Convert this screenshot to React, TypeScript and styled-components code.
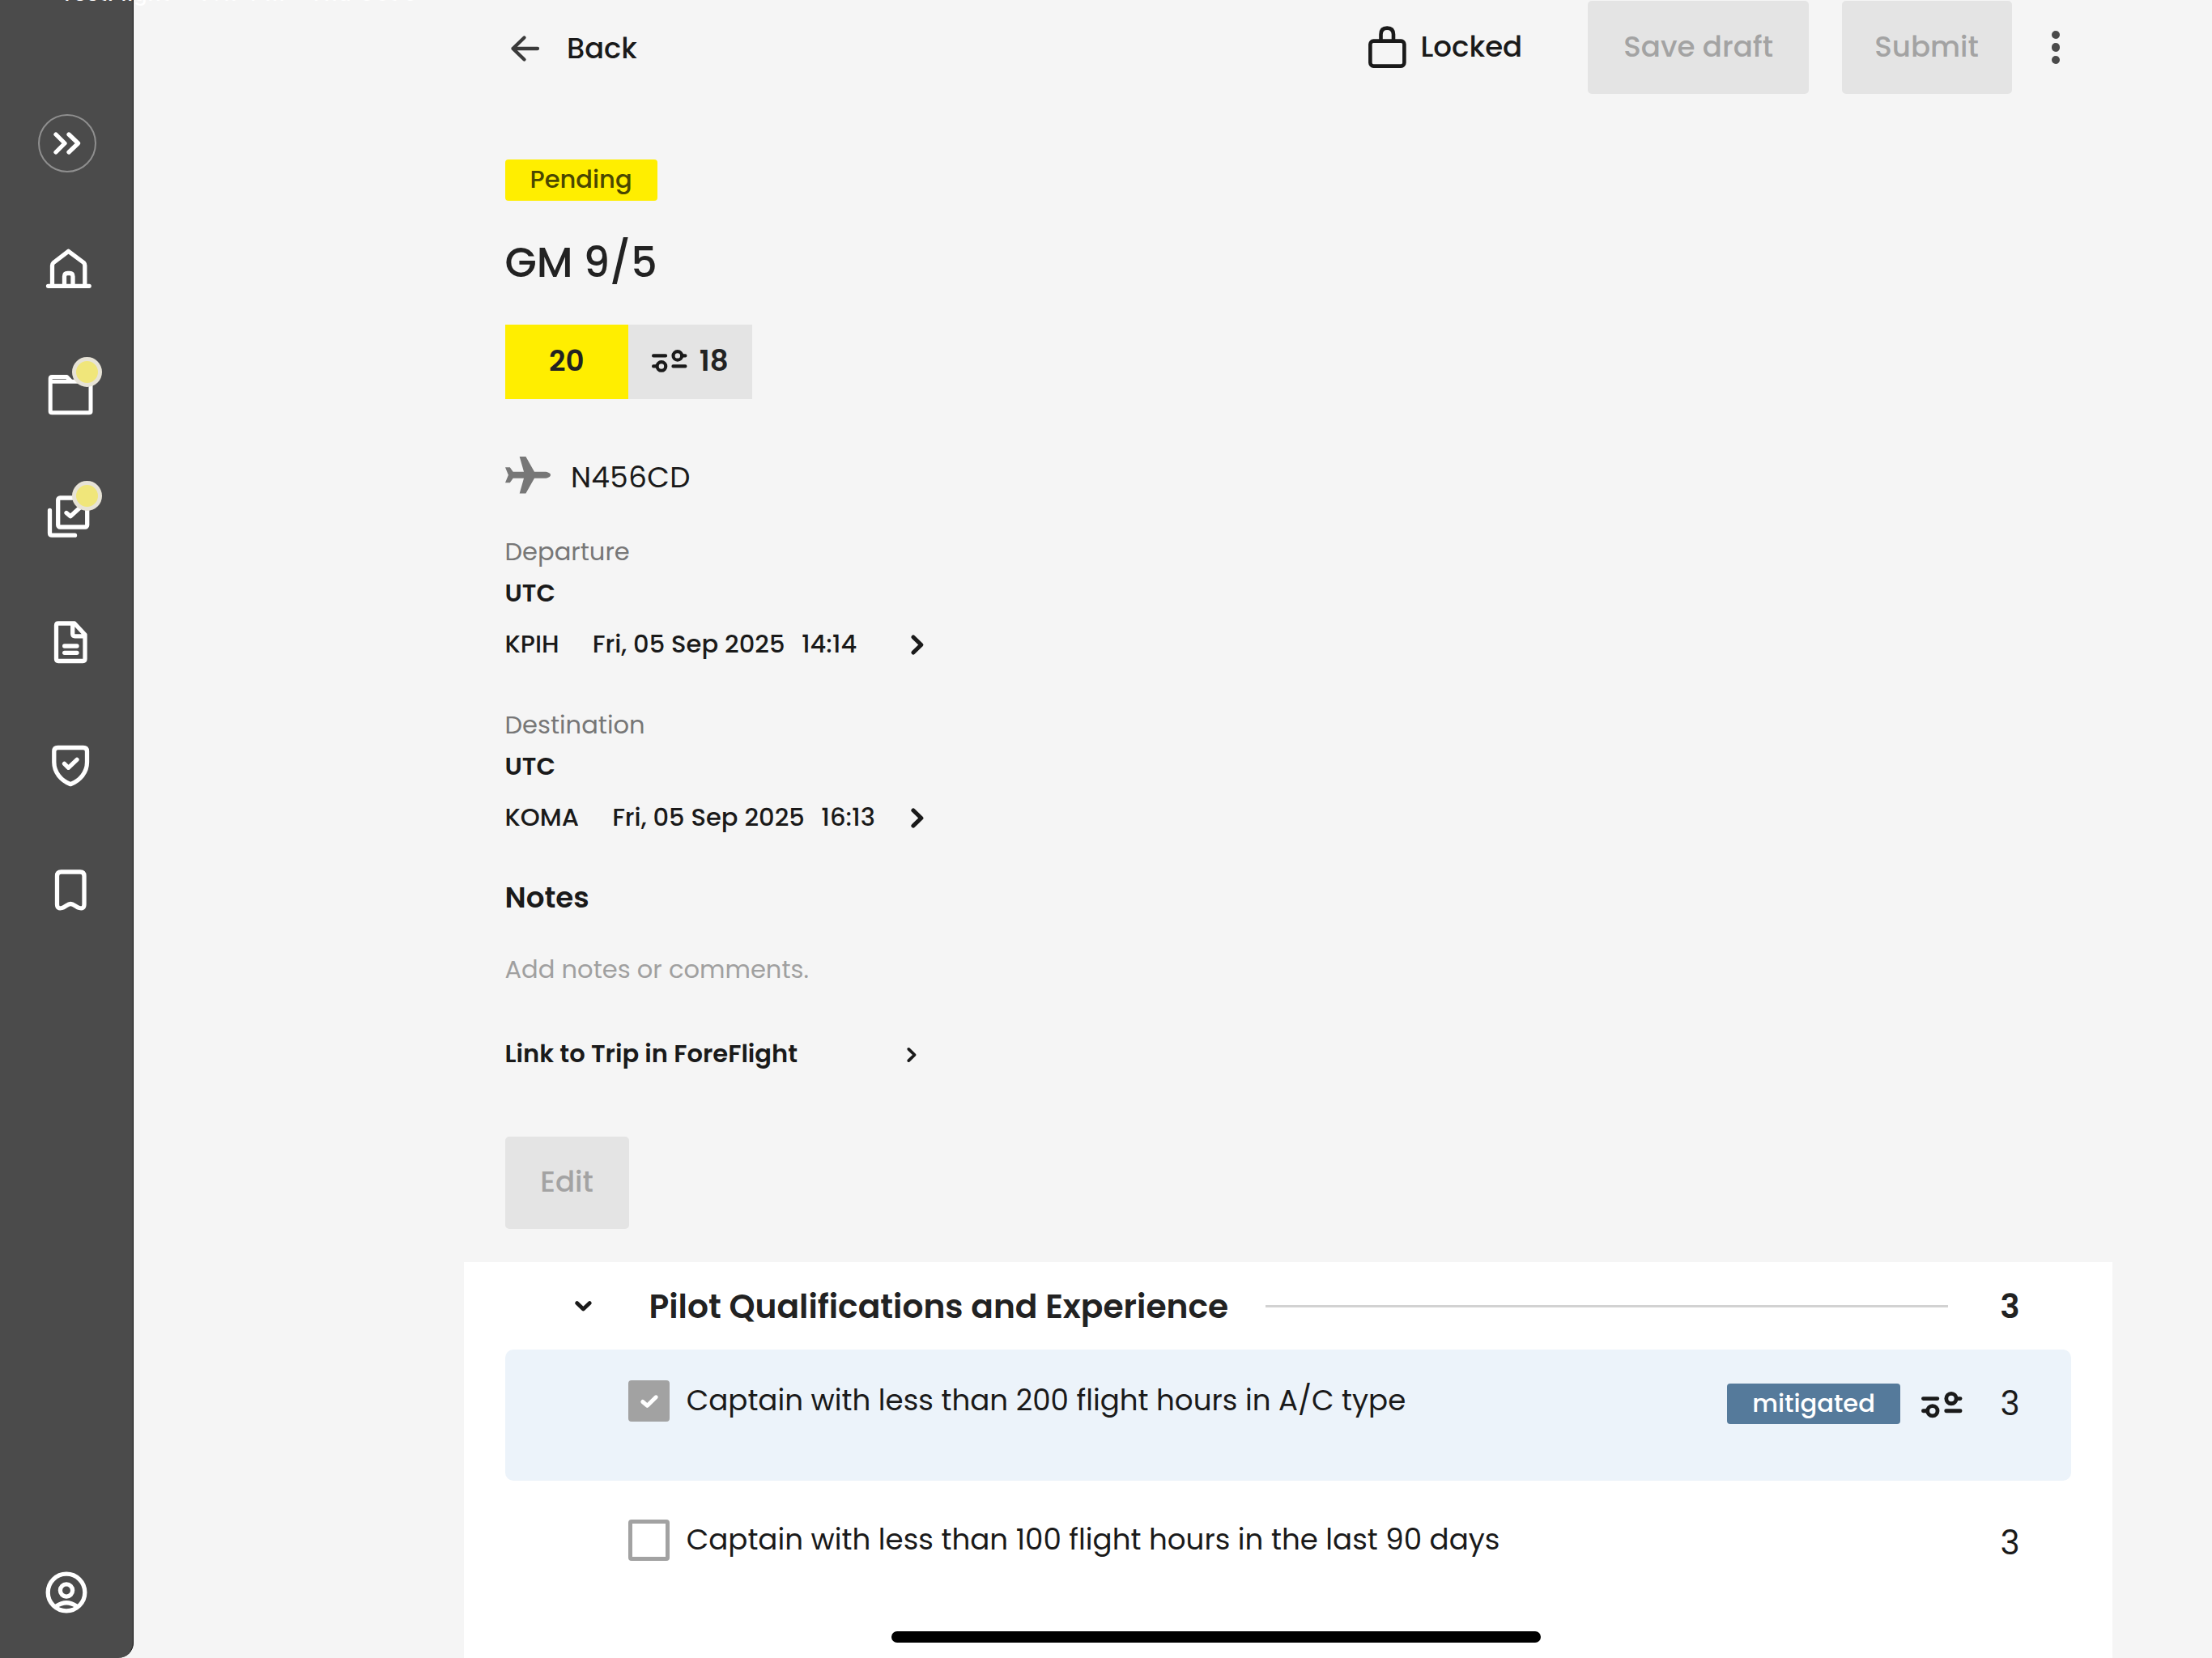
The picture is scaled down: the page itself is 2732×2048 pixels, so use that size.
import React from "react";
import styled, { createGlobalStyle, css } from "styled-components";

const GlobalStyle = createGlobalStyle`
  *, *::before, *::after { box-sizing: border-box; }
  body {
    margin: 0;
    background: #f5f5f5;
    color: #1a1a1a;
    font-family: "Poppins", "Inter", sans-serif;
    overflow: hidden;
  }
  button { font: inherit; border: 0; padding: 0; background: none; color: inherit; }
  svg { display: block; flex: none; overflow: visible; }
`;

const size = {
  sm: css`font-size: 30.56px; line-height: 50.9px;`,
  md: css`font-size: 35.65px; line-height: 56px;`,
  lg: css`font-size: 40.75px; line-height: 62px;`,
  xl: css`font-size: 50.8px; line-height: 76px;`,
};

const Screen = styled.div`
  position: relative;
  display: flex;
  width: 2732px;
  height: 2048px;
  overflow: hidden;
  background: #f5f5f5;
`;

/* ---------- status bar ---------- */

const StatusBar = styled.div`
  position: absolute;
  top: -22px;
  left: 74px;
  z-index: 2;
  display: flex;
  gap: 29px;
  font: 500 27px/28px "Inter", sans-serif;
  letter-spacing: 0.9px;
  white-space: nowrap;
  color: #fff;
`;

const StatusApp = styled.span`
  width: 145px;
`;

/* ---------- sidebar ---------- */

const Sidebar = styled.nav`
  flex: none;
  display: flex;
  flex-direction: column;
  align-items: center;
  width: 165px;
  height: 2048px;
  padding: 141px 0 0 1px;
  border-right: 1px solid #0c0c0c;
  border-bottom-right-radius: 19px;
  background: #4b4b4b;
`;

const ExpandButton = styled.button`
  display: flex;
  align-items: center;
  justify-content: center;
  width: 72px;
  height: 72px;
  margin-bottom: 42px;
  border: 2px solid #8f8f8f;
  border-radius: 50%;
`;

const NavItem = styled.div<{ $last?: boolean }>`
  position: relative;
  display: flex;
  align-items: center;
  justify-content: center;
  width: 163px;
  height: ${(p) => (p.$last ? 80 : 153)}px;
  ${(p) => p.$last && "margin-top: auto; margin-bottom: 41.5px;"}
`;

const Badge = styled.span`
  position: absolute;
  top: 32.8px;
  left: 87.8px;
  width: 37px;
  height: 37px;
  border: 5.5px solid #e7e3d6;
  border-radius: 50%;
  background: #f0e67a;
`;

const Glyph = styled.svg<{ $stroke?: number; $color?: string }>`
  fill: none;
  stroke: ${(p) => p.$color ?? "#1a1a1a"};
  stroke-width: ${(p) => p.$stroke ?? 5.3};
  stroke-linecap: round;
  stroke-linejoin: round;
`;

/* ---------- main column ---------- */

const Main = styled.main`
  display: flex;
  flex-direction: column;
  width: 2036.4px;
  margin-left: 408px;
`;

const Header = styled.header`
  display: flex;
  align-items: center;
  height: 117px;
  padding: 0 51px 0 50.5px;
  font-weight: 500;
  ${size.md}
`;

const Back = styled.button`
  display: flex;
  align-items: center;
  gap: 33px;
  margin-right: auto;
  padding: 2px 0 0 7.5px;
  font-size: 35.2px;
  font-weight: 500;
`;

const Locked = styled.div`
  display: flex;
  align-items: center;
  gap: 17px;
  width: 271px;
  padding-bottom: 1.4px;
`;

const Button = styled.button<{ $width: number }>`
  display: flex;
  align-items: center;
  justify-content: center;
  width: ${(p) => p.$width}px;
  height: 114.6px;
  padding-bottom: 2px;
  border-radius: 5px;
  background: #e4e4e4;
  color: #a3a3a3;
  font-weight: 500;
  ${size.md}
`;

const Actions = styled.div`
  display: flex;
  align-items: center;
  gap: 40.7px;
`;

const Menu = styled.button`
  display: flex;
  flex-direction: column;
  gap: 5.2px;
  margin: 0 14px 0 9px;
`;

const Dot = styled.i`
  width: 10.2px;
  height: 10.2px;
  border-radius: 50%;
  background: #4a4a4a;
`;

const Details = styled.section`
  display: flex;
  flex-direction: column;
  align-items: flex-start;
  height: 1442.4px;
  padding: 80.3px 50.5px 0;
`;

const Tag = styled.span<{ $bg: string; $color: string }>`
  display: flex;
  align-items: center;
  height: 50.8px;
  padding: 0 31px;
  border-radius: 4px;
  background: ${(p) => p.$bg};
  color: ${(p) => p.$color};
  font-weight: 500;
  ${size.sm}
`;

const Title = styled.h1`
  margin: 39.4px 0 37.5px;
  color: #222;
  font-weight: 500;
  ${size.xl}
`;

const Scores = styled.div`
  display: flex;
  height: 91.7px;
`;

const Score = styled.div<{ $bg: string }>`
  display: flex;
  align-items: center;
  justify-content: center;
  gap: 15px;
  width: 152.7px;
  padding-bottom: 2px;
  background: ${(p) => p.$bg};
  color: #222;
  font-weight: 600;
  ${size.md}
`;

const Aircraft = styled.div`
  display: flex;
  align-items: center;
  gap: 25.5px;
  height: 46px;
  margin: 71.3px 0 47.2px;
  ${size.md}
`;

const TailNumber = styled.span`
  padding-top: 6.6px;
  letter-spacing: 0.45px;
`;

const Leg = styled.div`
  display: flex;
  flex-direction: column;
  height: 214px;
`;

const Label = styled.span`
  color: #777;
  ${size.sm}
`;

const Zone = styled.span`
  margin-bottom: 12.2px;
  font-weight: 600;
  ${size.sm}
`;

const LinkRow = styled.div<{ $bold?: boolean }>`
  display: flex;
  align-items: center;
  justify-content: space-between;
  width: ${(p) => (p.$bold ? 508.6 : 517.2)}px;
  font-weight: ${(p) => (p.$bold ? 600 : 500)};
  white-space: pre;
  ${size.sm}
`;

const Schedule = styled.span`
  display: flex;
  gap: 20.5px;
`;

const Airport = styled.span`
  margin-right: 20.6px;
`;

const NotesTitle = styled.h2`
  margin: -4px 0 36px;
  font-weight: 600;
  ${size.md}
`;

const Placeholder = styled.p`
  margin: 0 0 53.2px;
  color: #a0a0a0;
  ${size.sm}
`;

const EditSlot = styled.div`
  margin-top: 75.6px;
`;

/* ---------- risk panel ---------- */

const Panel = styled.section`
  flex: 1;
  display: flex;
  flex-direction: column;
  gap: 10px;
  padding: 0 51px 0 50.5px;
  background: #fff;
`;

const PanelHead = styled.div`
  display: flex;
  align-items: center;
  height: 107.4px;
  margin-bottom: -10px;
  padding: 1px 50px 0 86.5px;
  color: #222;
  font-weight: 600;
  ${size.lg}
`;

const PanelTitle = styled.h2`
  margin: 0 46px 0 70.5px;
  font-size: inherit;
  font-weight: 600;
  white-space: nowrap;
`;

const Rule = styled.hr`
  flex: 1;
  height: 3px;
  margin: 0 50.5px 0 0;
  border: 0;
  background: #d2d2d2;
`;

const Points = styled.span<{ $drop?: number }>`
  width: 52px;
  padding-top: ${(p) => p.$drop ?? 0}px;
  text-align: center;
  ${size.lg}
`;

const Risk = styled.div<{ $active?: boolean }>`
  display: flex;
  align-items: flex-start;
  height: 162px;
  padding: 33px 50px 0 152.6px;
  border-radius: 10px;
  background: ${(p) => (p.$active ? "#ecf3fa" : "transparent")};
`;

const RiskLine = styled.div`
  flex: 1;
  display: flex;
  align-items: center;
  height: 62px;
`;

const Checkbox = styled.span<{ $checked?: boolean }>`
  display: flex;
  align-items: center;
  justify-content: center;
  width: 51px;
  height: 51px;
  margin-right: 20.6px;
  border: 5px solid #a2a2a2;
  border-radius: 4px;
  background: ${(p) => (p.$checked ? "#a2a2a2" : "transparent")};
`;

const RiskText = styled.span`
  margin-right: auto;
  padding-bottom: 1px;
  white-space: nowrap;
  ${size.md}
`;

const RiskMeta = styled.div`
  display: flex;
  align-items: center;
  padding-top: 6.6px;
`;

const TuneSlot = styled.span`
  margin: 3px 33px 0 26px;
`;

const HomeIndicator = styled.div`
  position: absolute;
  left: 1101px;
  bottom: 19px;
  width: 802px;
  height: 14px;
  border-radius: 7px;
  background: #000;
`;

/* ---------- icons ---------- */

const NavIcon = ({ y, children }: { y: number; children: React.ReactNode }) => (
  <Glyph width="80" height="80" viewBox={`42.5 ${y} 80 80`} $color="#fff">
    {children}
  </Glyph>
);

const ChevronRight = ({ small }: { small?: boolean }) => (
  <Glyph
    width={small ? 12 : 16}
    height={small ? 20 : 25}
    viewBox="0 0 16 25"
    $stroke={small ? 5 : 5.2}
  >
    <path d="M3 3 12.8 12.5 3 22" />
  </Glyph>
);

const Tune = ({ width }: { width: number }) => (
  <Glyph width={width} height={(width * 32) / 50} viewBox="0 0 50 32" $stroke={4.8}>
    <path d="M2.4 8.5H19.6M44 8.5H47.6M2.4 23.5H6.5M30.4 23.5H47.6" />
    <circle cx="36.6" cy="8.5" r="6.1" />
    <circle cx="13.7" cy="23.5" r="6.1" />
  </Glyph>
);

const Plane = () => (
  <svg width="56" height="46" viewBox="0 0 56 46" fill="#777">
    <path d="M56 22.7c0 2.2-3.3 4-7.4 4H36L25.4 45.6H17.7L23 26.7H9.7L5.8 32.2H0L3.9 22.7 0 13.3H5.8L9.7 18.8H23L17.7 0H25.4L36 18.8H48.6c4.1 0 7.4 1.7 7.4 3.9Z" />
  </svg>
);

const FlightLeg = (p: { label: string; airport: string; date: string; time: string }) => (
  <Leg>
    <Label>{p.label}</Label>
    <Zone>UTC</Zone>
    <LinkRow>
      <Schedule>
        <Airport>{p.airport}</Airport>
        <span>{p.date}</span>
        <span>{p.time}</span>
      </Schedule>
      <ChevronRight />
    </LinkRow>
  </Leg>
);

export default function App() {
  return (
    <Screen>
      <GlobalStyle />
      <StatusBar>
        <StatusApp>TestFlight</StatusApp>
        <span>7:17 PM</span>
        <span>Thu Oct 9</span>
      </StatusBar>

      <Sidebar>
        <ExpandButton aria-label="Expand menu">
          <Glyph width="34" height="28" viewBox="0 0 34 28" $color="#fff">
            <path d="M3 3 14 14 3 25M19 3 30.5 14 19 25" />
          </Glyph>
        </ExpandButton>
        <NavItem>
          <NavIcon y={291.5}>
            <path d="M59 352.8H109.7M64 352V327.5Q64 325.5 65.5 324L84 309.8 103 324Q104.3 325.5 104.3 327.5V352M79 352V341Q79 337 83 337H85.5Q89.5 337 89.5 341V352" />
          </NavIcon>
        </NavItem>
        <NavItem>
          <NavIcon y={444.5}>
            <path strokeWidth="5" d="M61.7 471V467Q61.7 465 63.7 465H82L87.5 470.7H111.5V507.5Q111.5 509.3 109.5 509.3H63.7Q61.7 509.3 61.7 507.5ZM62 470.7H88" />
          </NavIcon>
          <Badge />
        </NavItem>
        <NavItem>
          <NavIcon y={597.5}>
            <rect x="71.2" y="614.5" width="36" height="36" rx="2.5" />
            <path d="M61 630V658Q61 660.7 63.7 660.7H92M81.5 633 86.5 637.3 101 624" />
          </NavIcon>
          <Badge />
        </NavItem>
        <NavItem>
          <NavIcon y={750.5}>
            <path d="M71.5 769.5H91.5L104.5 783.5V813.5Q104.5 816 102 816H71.5Q69 816 69 813.5V772Q69 769.5 71.5 769.5ZM89.2 770V782.5Q89.2 785.3 92 785.3H104M79.2 797.5H94.5M79.2 805.8H94.5" />
          </NavIcon>
        </NavItem>
        <NavItem>
          <NavIcon y={903.5}>
            <path d="M71 923H102.3Q107 923 107 927.5V941C107 953.5 98.5 963.5 86.6 968.2 74.8 963.5 66.3 953.5 66.3 941V927.5Q66.3 923 71 923ZM79 942.8 84 947.8 94.5 937.8" />
          </NavIcon>
        </NavItem>
        <NavItem>
          <NavIcon y={1056.5}>
            <path d="M75 1076.5H98.5Q103.5 1076.5 103.5 1081.5V1116.5Q103.5 1122.5 97.5 1121C93.5 1120 90.5 1116 86.7 1116S80 1120 76 1121Q70 1122.5 70 1116.5V1081.5Q70 1076.5 75 1076.5Z" />
          </NavIcon>
        </NavItem>
        <NavItem $last>
          <NavIcon y={1926.5}>
            <circle cx="81.5" cy="1966.5" r="22.8" />
            <circle cx="81.5" cy="1964" r="7.6" />
            <path d="M69 1983.5Q81.5 1975 94 1983.5" />
          </NavIcon>
        </NavItem>
      </Sidebar>

      <Main>
        <Header>
          <Back>
            <Glyph width="36" height="32" viewBox="0 0 36 32" $stroke={4.3} $color="#3a3a3a">
              <path d="M2.5 16H33M16.5 2.5 2.5 16 16.5 29.5" />
            </Glyph>
            <span>Back</span>
          </Back>
          <Locked>
            <Glyph width="47" height="52" viewBox="0 0 47 52" $stroke={4.6}>
              <rect x="2.4" y="18.6" width="42" height="31" rx="4" />
              <path d="M15.5 18V10.5Q15.5 2.6 23.2 2.6T31 10.5V18" />
            </Glyph>
            <span>Locked</span>
          </Locked>
          <Actions>
            <Button $width={272.4}>Save draft</Button>
            <Button $width={210}>Submit</Button>
            <Menu aria-label="More">
              <Dot />
              <Dot />
              <Dot />
            </Menu>
          </Actions>
        </Header>

        <Details>
          <Tag $bg="#ffee00" $color="#4a4700">Pending</Tag>
          <Title>GM 9/5</Title>
          <Scores>
            <Score $bg="#ffee00">20</Score>
            <Score $bg="#e4e4e4">
              <Tune width={43.5} />
              18
            </Score>
          </Scores>
          <Aircraft>
            <Plane />
            <TailNumber>N456CD</TailNumber>
          </Aircraft>
          <FlightLeg label="Departure" airport="KPIH" date="Fri, 05 Sep 2025" time="14:14" />
          <FlightLeg label="Destination" airport="KOMA" date="Fri, 05 Sep 2025" time="16:13" />
          <NotesTitle>Notes</NotesTitle>
          <Placeholder>Add notes or comments.</Placeholder>
          <LinkRow $bold>
            Link to Trip in ForeFlight
            <ChevronRight small />
          </LinkRow>
          <EditSlot>
            <Button $width={153}>Edit</Button>
          </EditSlot>
        </Details>

        <Panel>
          <PanelHead>
            <Glyph width="21" height="13" viewBox="0 0 21 13" $stroke={4.8}>
              <path d="M2.6 2.6 10.4 10 18.3 2.6" />
            </Glyph>
            <PanelTitle>Pilot Qualifications and Experience</PanelTitle>
            <Rule />
            <Points>3</Points>
          </PanelHead>
          <Risk $active>
            <RiskLine>
              <Checkbox $checked>
                <Glyph width="22" height="16" viewBox="0 0 22 16" $stroke={5} $color="#fff">
                  <path d="M2.8 8.5 8.5 13.3 19.2 2.8" />
                </Glyph>
              </Checkbox>
              <RiskText>Captain with less than 200 flight hours in A/C type</RiskText>
              <RiskMeta>
                <Tag $bg="#557a9b" $color="#fff">mitigated</Tag>
                <TuneSlot>
                  <Tune width={50.5} />
                </TuneSlot>
                <Points>3</Points>
              </RiskMeta>
            </RiskLine>
          </Risk>
          <Risk>
            <RiskLine>
              <Checkbox />
              <RiskText>Captain with less than 100 flight hours in the last 90 days</RiskText>
              <Points $drop={6.6}>3</Points>
            </RiskLine>
          </Risk>
        </Panel>
      </Main>

      <HomeIndicator />
    </Screen>
  );
}
